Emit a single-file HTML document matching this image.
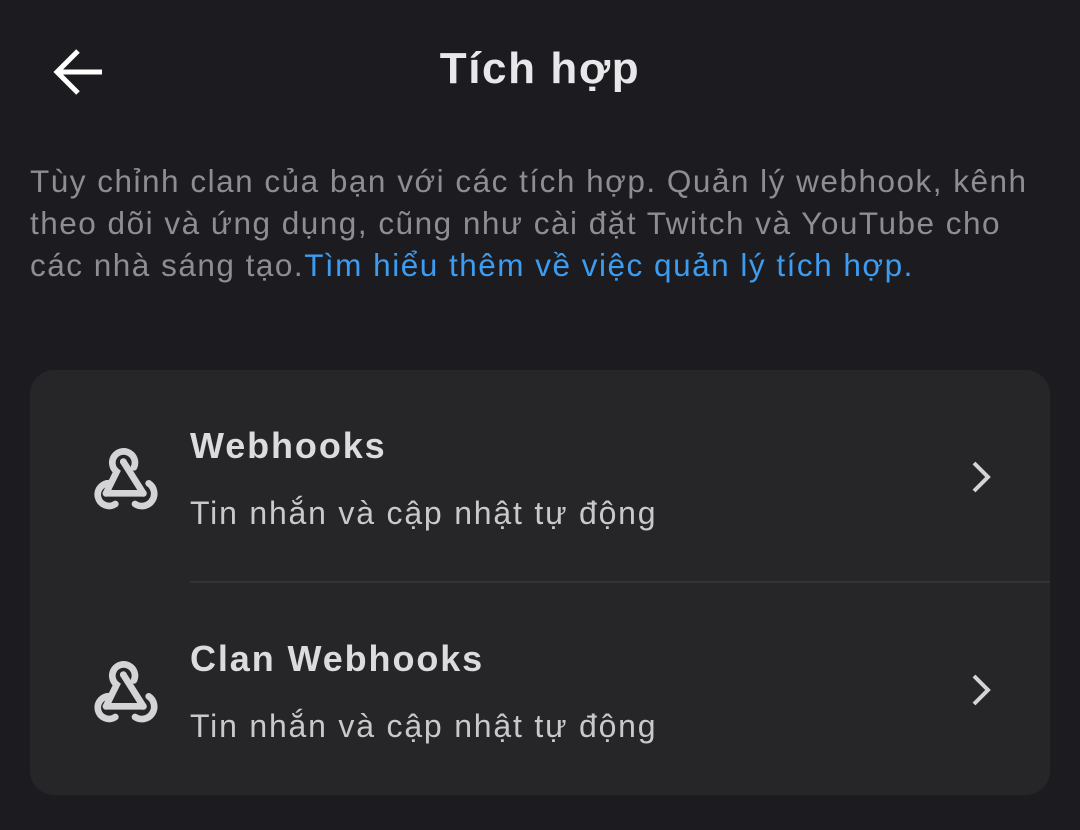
<!DOCTYPE html><html><head><style>
body{margin:0;width:1080px;height:830px;background:#1c1c20;font-family:"Liberation Sans",Roboto,sans-serif;position:relative;overflow:hidden}
.t{position:absolute;left:0;width:1080px;top:44px;text-align:center;color:#e8e8ea;font-size:44px;font-weight:bold;letter-spacing:1.6px}
.d{position:absolute;left:30px;top:160px;width:1025px;color:#8d8d92;font-size:31.5px;line-height:42px;letter-spacing:1.5px}
.d span{color:#3d9cf0}
.card{position:absolute;left:30px;top:370px;width:1020px;height:425px;background:#262628;border-radius:24px}
.h{position:absolute;left:160px;color:#dcdcde;font-size:36px;font-weight:bold;letter-spacing:1.9px}
.s{position:absolute;left:160px;color:#c9c9cc;font-size:32px;letter-spacing:1.8px}
.div{position:absolute;left:160px;right:0;top:211px;height:2px;background:#333336}
svg{position:absolute}
</style></head><body>
<svg style="left:50px;top:45px" width="56" height="56" viewBox="0 0 56 56"><path d="M28 6 L7 27 L28 48 M7 27 H52" fill="none" stroke="#fff" stroke-width="5"/></svg>
<div class="t">Tích hợp</div>
<div class="d">Tùy chỉnh clan của bạn với các tích hợp. Quản lý webhook, kênh theo dõi và ứng dụng, cũng như cài đặt Twitch và YouTube cho các nhà sáng tạo.<span>Tìm hiểu thêm về việc quản lý tích hợp.</span></div>
<div class="card">
<svg style="left:50px;top:60px" width="100" height="100" viewBox="0 0 300 300"><g fill="none" stroke="#d4d4d6" stroke-width="20" stroke-linecap="round"><path d="M162 112 A34 34 0 1 0 110 125 L78 190"/><path d="M92 160 A34 34 0 1 0 106 222"/><path d="M78 190 H190"/><path d="M130 95 L190 190"/><path d="M206 160 A34 34 0 1 1 165 222"/></g><circle cx="130" cy="95" r="10" fill="#d4d4d6"/><circle cx="190" cy="190" r="10" fill="#d4d4d6"/></svg>
<div class="h" style="top:55px">Webhooks</div>
<div class="s" style="top:125px">Tin nhắn và cập nhật tự động</div>
<svg style="left:938px;top:90px" width="30" height="34" viewBox="0 0 30 34"><path d="M6 3 L20 17 L6 31" fill="none" stroke="#d4d4d6" stroke-width="4"/></svg>
<div class="div"></div>
<svg style="left:50px;top:273px" width="100" height="100" viewBox="0 0 300 300"><g fill="none" stroke="#d4d4d6" stroke-width="20" stroke-linecap="round"><path d="M162 112 A34 34 0 1 0 110 125 L78 190"/><path d="M92 160 A34 34 0 1 0 106 222"/><path d="M78 190 H190"/><path d="M130 95 L190 190"/><path d="M206 160 A34 34 0 1 1 165 222"/></g><circle cx="130" cy="95" r="10" fill="#d4d4d6"/><circle cx="190" cy="190" r="10" fill="#d4d4d6"/></svg>
<div class="h" style="top:268px">Clan Webhooks</div>
<div class="s" style="top:338px">Tin nhắn và cập nhật tự động</div>
<svg style="left:938px;top:303px" width="30" height="34" viewBox="0 0 30 34"><path d="M6 3 L20 17 L6 31" fill="none" stroke="#d4d4d6" stroke-width="4"/></svg>
</div>
</body></html>
